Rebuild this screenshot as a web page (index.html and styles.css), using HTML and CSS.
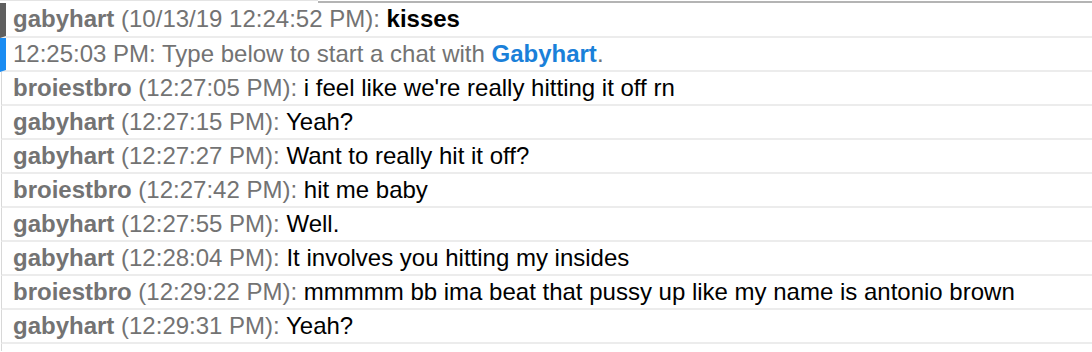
FILE: index.html
```html
<!DOCTYPE html>
<html>
<head>
<meta charset="utf-8">
<link rel="stylesheet" href="styles.css">
</head>
<body>
<div class="log">
  <div class="topline"><span class="tl-left"></span><span class="tl-right"></span></div>
  <div class="row first mark-gray"><span class="nick">gabyhart</span> <span class="ts">(10/13/19 12:24:52 PM):</span> <span class="msg strong">kisses</span></div>
  <div class="row mark-blue"><span class="ts">12:25:03 PM: Type below to start a chat with <span class="link">Gabyhart</span>.</span></div>
  <div class="row"><span class="nick">broiestbro</span> <span class="ts">(12:27:05 PM):</span> <span class="msg">i feel like we're really hitting it off rn</span></div>
  <div class="row"><span class="nick">gabyhart</span> <span class="ts">(12:27:15 PM):</span> <span class="msg">Yeah?</span></div>
  <div class="row"><span class="nick">gabyhart</span> <span class="ts">(12:27:27 PM):</span> <span class="msg">Want to really hit it off?</span></div>
  <div class="row"><span class="nick">broiestbro</span> <span class="ts">(12:27:42 PM):</span> <span class="msg">hit me baby</span></div>
  <div class="row"><span class="nick">gabyhart</span> <span class="ts">(12:27:55 PM):</span> <span class="msg">Well.</span></div>
  <div class="row"><span class="nick">gabyhart</span> <span class="ts">(12:28:04 PM):</span> <span class="msg">It involves you hitting my insides</span></div>
  <div class="row"><span class="nick">broiestbro</span> <span class="ts">(12:29:22 PM):</span> <span class="msg">mmmmm bb ima beat that pussy up like my name is antonio brown</span></div>
  <div class="row"><span class="nick">gabyhart</span> <span class="ts">(12:29:31 PM):</span> <span class="msg">Yeah?</span></div>
  <div class="row tail"></div>
</div>
</body>
</html>
```
FILE: styles.css
```css
html, body {
  margin: 0;
  padding: 0;
  background: #ffffff;
  overflow: hidden;
}
.log {
  font-family: "Liberation Sans", Arial, Helvetica, sans-serif;
  font-size: 24px;
  width: 1092px;
}
.topline {
  display: flex;
  height: 3px;
}
.tl-left {
  width: 318px;
  border-top: 1px solid #e4e4e4;
}
.tl-right {
  flex: 1;
  margin-top: 1px;
  height: 2px;
  background: #b4b4b4;
}
.row {
  height: 32px;
  line-height: 32px;
  border-bottom: 2px solid #ececec;
  border-left: 1px solid #d8d8d8;
  margin-left: 1px;
  padding-left: 11px;
  white-space: nowrap;
  color: #000;
}
.row.first {
  height: 33px;
}
.row.tail {
  height: 7px;
  border-bottom: none;
}
.mark-gray {
  border-left: 6px solid #5f5f5f;
  margin-left: 0;
  padding-left: 7px;
}
.mark-blue {
  border-left: 6px solid #1a8cf2;
  margin-left: 0;
  padding-left: 7px;
}
.nick {
  font-weight: bold;
  color: #737373;
}
.ts {
  color: #737373;
}
.msg {
  color: #000;
}
.strong {
  font-weight: bold;
}
.link {
  color: #1a80d9;
  font-weight: bold;
}
```
